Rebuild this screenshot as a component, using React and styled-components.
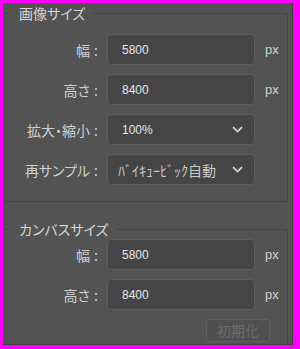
import React from 'react';
import styled, { createGlobalStyle } from 'styled-components';

const Global = createGlobalStyle`
  html, body { margin: 0; padding: 0; background: #ff00ff; }
  * { box-sizing: border-box; }
`;

const jp = `"Noto Sans CJK JP", "Noto Sans", sans-serif`;
const latin = `"Liberation Sans", Arial, sans-serif`;

const Frame = styled.div`
  width: 300px;
  height: 349px;
  background: #ff00ff;
  padding: 3px 7px 4px 3px;
  display: flex;
`;

const Panel = styled.div`
  flex: 1;
  background: #535353;
  border-right: 1px solid #404040;
  border-bottom: 1px solid #404040;
  display: flex;
  flex-direction: column;
  font-family: ${jp};
  font-feature-settings: "palt";
`;

const Group = styled.fieldset`
  margin: ${p => p.$top}px 4px 0 1px;
  padding: ${p => p.$padTop}px 0 ${p => p.$padBottom}px 0;
  border: 1px solid #464646;
  border-left: 0;
  ${p => p.$fill && 'flex: 1; border-bottom: 0;'}
  display: flex;
  flex-direction: column;
  gap: 9px;
  min-width: 0;
`;

const Legend = styled.legend`
  margin-left: 4px;
  padding: 0 8px 0 11px;
  font-size: 14px;
  line-height: 16px;
  color: #d6d6d6;
`;

const Row = styled.div`
  display: grid;
  grid-template-columns: 94px 148px auto;
  column-gap: 9px;
  align-items: center;
  height: 31px;
`;

const Label = styled.div`
  text-align: right;
  font-size: 14px;
  color: #cfcfcf;
  white-space: nowrap;
`;

const Colon = styled.span`
  margin-left: 4px;
`;

const Field = styled.div`
  height: 31px;
  background: #454545;
  border: 1px solid #5d5d5d;
  border-radius: 4px;
  display: flex;
  align-items: center;
  justify-content: space-between;
  padding: 0 11px 0 ${p => p.$pad}px;
  color: #e6e6e6;
  font-family: ${p => (p.$jp ? jp : latin)};
  font-size: ${p => (p.$jp ? 14 : 12)}px;
  white-space: nowrap;
`;

const Unit = styled.div`
  padding-left: 1px;
  font-family: ${latin};
  font-size: 13px;
  color: #d2d2d2;
`;

const ButtonRow = styled.div`
  display: flex;
  justify-content: flex-end;
  padding-right: 17px;
`;

const Button = styled.button`
  width: 64px;
  height: 23px;
  margin: 0;
  padding: 0;
  background: #505050;
  border: 1px solid #5f5f5f;
  border-radius: 3px;
  color: #6c6c6c;
  font-family: ${jp};
  font-feature-settings: "palt";
  font-size: 14px;
  line-height: 21px;
`;

const Chevron = () => (
  <svg width="11" height="7" viewBox="0 0 11 7">
    <path d="M1 1.2 L5.5 5.5 L10 1.2" fill="none" stroke="#d8d8d8" strokeWidth="1.7" />
  </svg>
);

const InputRow = ({ label, value }) => (
  <Row>
    <Label>{label}<Colon>:</Colon></Label>
    <Field $pad={14}>{value}</Field>
    <Unit>px</Unit>
  </Row>
);

const SelectRow = ({ label, value, jpText }) => (
  <Row>
    <Label>{label}<Colon>:</Colon></Label>
    <Field $pad={jpText ? 10 : 14} $jp={jpText} style={{ color: jpText ? '#c9c9c9' : undefined }}>
      <span>{value}</span>
      <Chevron />
    </Field>
  </Row>
);

export default function App() {
  return (
    <>
      <Global />
      <Frame>
        <Panel>
          <Group $top={2} $padTop={13} $padBottom={16}>
            <Legend>画像サイズ</Legend>
            <InputRow label="幅" value="5800" />
            <InputRow label="高さ" value="8400" />
            <SelectRow label="拡大・縮小" value="100%" />
            <SelectRow label="再サンプル" value="ﾊﾞｲｷｭｰﾋﾞｯｸ自動" jpText />
          </Group>
          <Group $top={19} $padTop={2} $padBottom={0} $fill>
            <Legend>カンバスサイズ</Legend>
            <InputRow label="幅" value="5800" />
            <InputRow label="高さ" value="8400" />
            <ButtonRow>
              <Button disabled>初期化</Button>
            </ButtonRow>
          </Group>
        </Panel>
      </Frame>
    </>
  );
}
